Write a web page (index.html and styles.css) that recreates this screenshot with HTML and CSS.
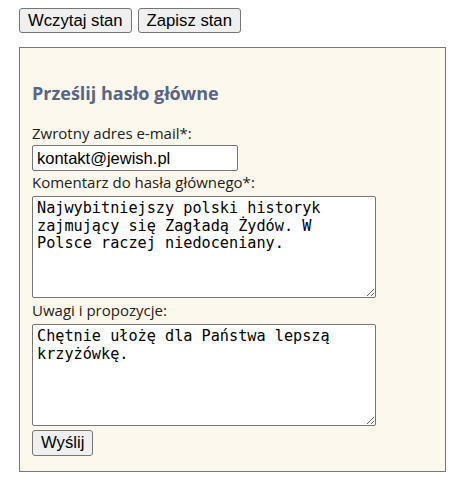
FILE: index.html
```html
<!DOCTYPE html>
<html lang="pl">
<head>
<meta charset="utf-8">
<title>Prześlij hasło główne</title>
<link rel="stylesheet" href="styles.css">
</head>
<body>
<div class="toolbar">
  <button class="btn" type="button">Wczytaj stan</button>
  <button class="btn" type="button">Zapisz stan</button>
</div>
<form class="panel">
  <h3 class="title">Prześlij hasło główne</h3>
  <label class="label label-first" for="email">Zwrotny adres e-mail*:</label>
  <input class="field" id="email" type="text" value="kontakt@jewish.pl">
  <label class="label" for="comment">Komentarz do hasła głównego*:</label>
  <textarea class="area" id="comment">Najwybitniejszy polski historyk zajmujący się Zagładą Żydów. W Polsce raczej niedoceniany.</textarea>
  <label class="label label-gap" for="notes">Uwagi i propozycje:</label>
  <textarea class="area" id="notes">Chętnie ułożę dla Państwa lepszą krzyżówkę.</textarea>
  <button class="btn btn-send" type="button">Wyślij</button>
</form>
</body>
</html>
```
FILE: styles.css
```css
html, body {
  margin: 0;
  background: #ffffff;
}
body {
  padding: 8px 19px;
  font-family: "Open Sans", "Noto Sans", sans-serif;
  color: #222;
}
.toolbar {
  display: flex;
  gap: 6px;
}
.btn {
  height: 25px;
  padding: 0 8px;
  font-family: "Liberation Sans", Arial, sans-serif;
  font-size: 16.7px;
  color: #000;
  background: #efefef;
  border: 1px solid #767676;
  border-radius: 3px;
}
.panel {
  box-sizing: border-box;
  margin-top: 14px;
  width: 427px;
  height: 425px;
  padding: 0 12px;
  background: #fdf8ee;
  border: 1px solid #7a7a7a;
}
.title {
  margin: 33px 0 0 0;
  font-size: 18px;
  line-height: 24px;
  font-weight: 700;
  color: #56668a;
}
.label {
  display: block;
  font-size: 15px;
  line-height: 23px;
  color: #222;
}
.label-first {
  margin-top: 17px;
}
.label-gap {
  margin-top: 1px;
}
.field {
  display: block;
  box-sizing: border-box;
  width: 206px;
  height: 26px;
  margin: 0;
  padding: 1px 4px;
  font-family: "Liberation Sans", Arial, sans-serif;
  font-size: 16.5px;
  color: #000;
  background: #fff;
  border: 1px solid #767676;
  border-radius: 2px;
}
.area {
  display: block;
  box-sizing: border-box;
  width: 344px;
  height: 102px;
  margin: 2px 0 0 0;
  padding: 3px 4px 2px;
  font-family: "DejaVu Sans Mono", "Liberation Mono", monospace;
  font-size: 15.2px;
  line-height: 17.6px;
  color: #000;
  background: #fff;
  border: 1px solid #767676;
  border-radius: 2px;
  resize: both;
}
.btn-send {
  margin-top: 4px;
  height: 26px;
}
```
